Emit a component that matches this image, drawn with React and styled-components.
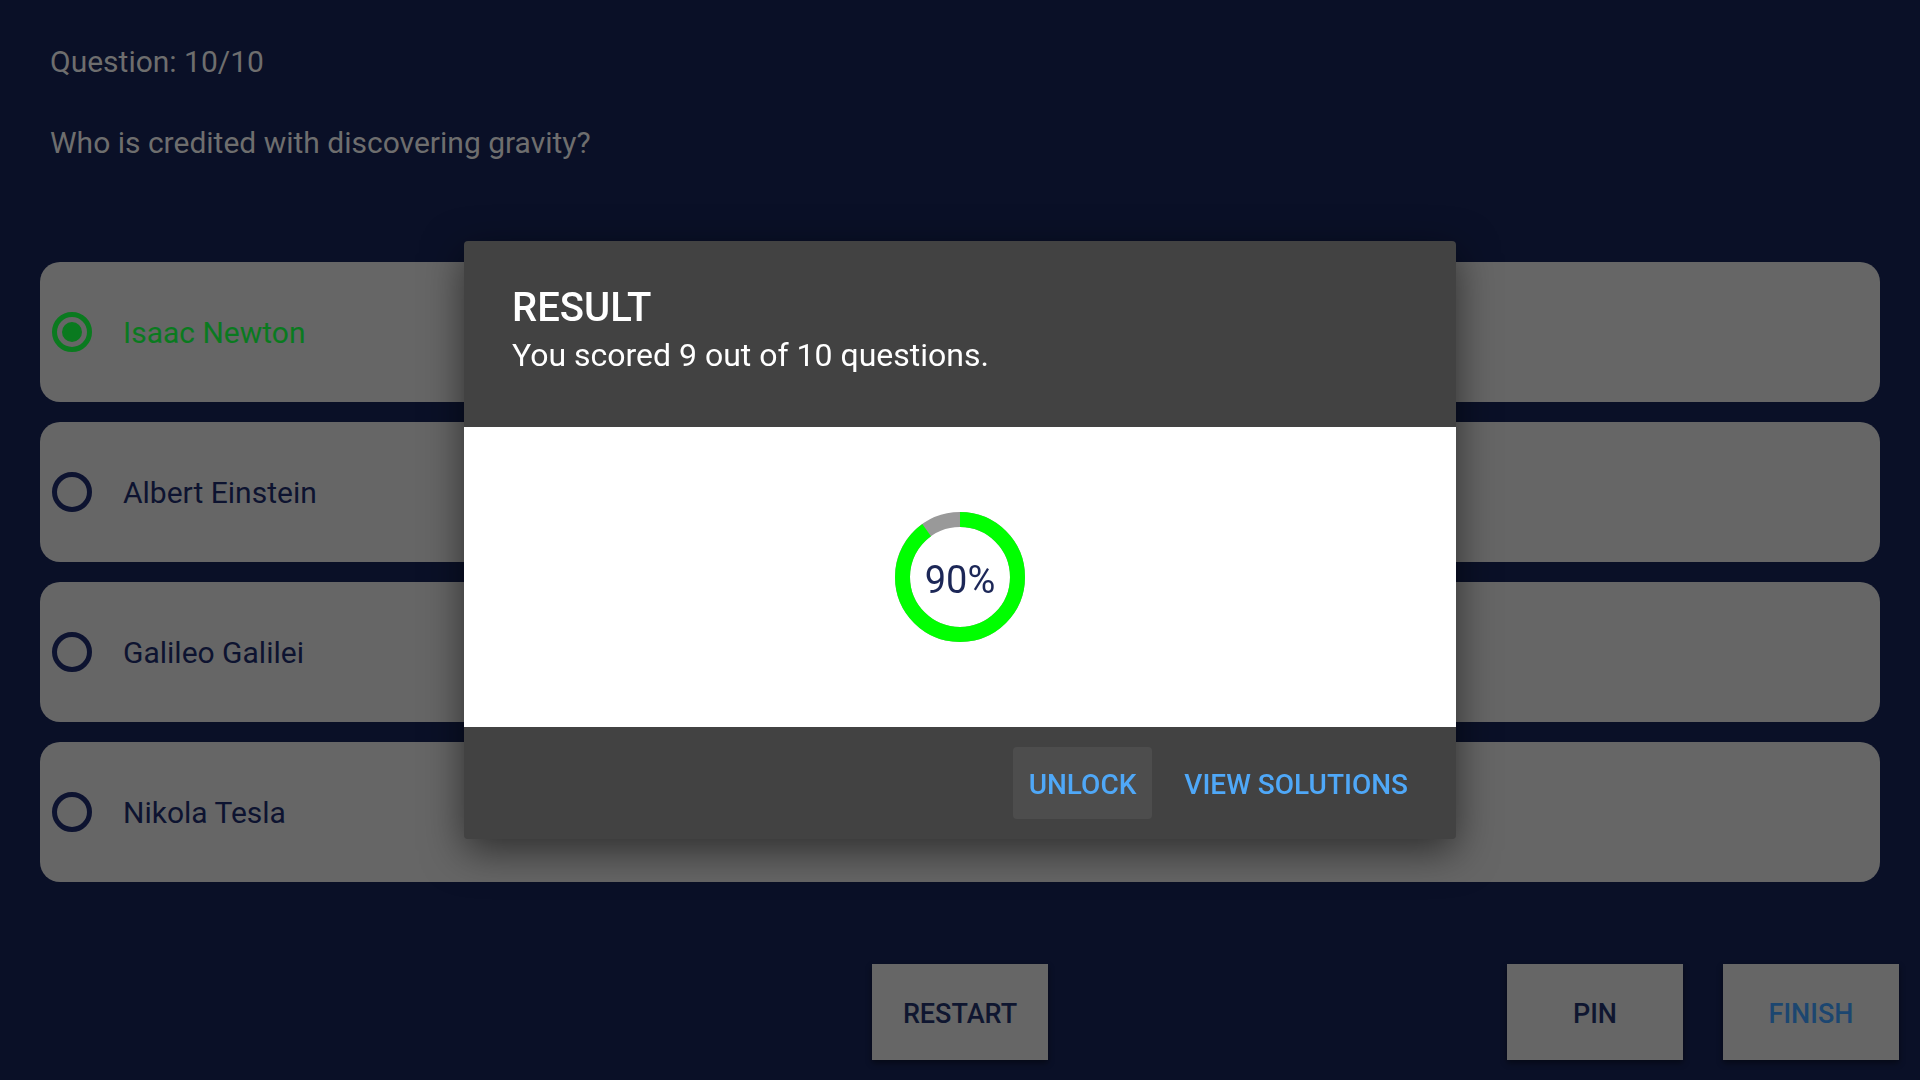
import styled, { createGlobalStyle } from "styled-components";

const GlobalStyle = createGlobalStyle`
  * {
    box-sizing: border-box;
  }

  body {
    margin: 0;
    background-color: #0a1027;
    font-family: Roboto, "Noto Sans", "Liberation Sans", sans-serif;
  }
`;

const options = [
  { id: 1, label: "Isaac Newton", checked: true },
  { id: 2, label: "Albert Einstein" },
  { id: 3, label: "Galileo Galilei" },
  { id: 4, label: "Nikola Tesla" },
];

function ScoreRing({ percent }) {
  const r = 57.5;
  const c = 2 * Math.PI * r;
  const done = (c * percent) / 100;

  return (
    <Ring>
      <svg width="130" height="130" viewBox="0 0 130 130">
        <g transform="rotate(-90 65 65)">
          <circle cx="65" cy="65" r={r} fill="none" stroke="#999999" strokeWidth="15" />
          <circle
            cx="65"
            cy="65"
            r={r}
            fill="none"
            stroke="#00ff00"
            strokeWidth="15"
            strokeDasharray={`${done} ${c}`}
          />
        </g>
      </svg>
      <RingLabel>{percent}%</RingLabel>
    </Ring>
  );
}

function App() {
  return (
    <>
      <GlobalStyle />
      <Page>
        <QuestionNumber>Question: 10/10</QuestionNumber>
        <QuestionText>Who is credited with discovering gravity?</QuestionText>

        <Options>
          {options.map((o) => (
            <Option key={o.id}>
              <Radio $checked={o.checked} />
              <OptionLabel $checked={o.checked}>{o.label}</OptionLabel>
            </Option>
          ))}
        </Options>

        <BottomBar>
          <span />
          <BarButton>RESTART</BarButton>
          <RightGroup>
            <BarButton>PIN</BarButton>
            <BarButton $accent>FINISH</BarButton>
          </RightGroup>
        </BottomBar>
      </Page>

      <Backdrop>
        <Dialog>
          <DialogHeader>
            <DialogTitle>RESULT</DialogTitle>
            <DialogMessage>You scored 9 out of 10 questions.</DialogMessage>
          </DialogHeader>
          <DialogBody>
            <ScoreRing percent={90} />
          </DialogBody>
          <DialogFooter>
            <TextButton $filled>UNLOCK</TextButton>
            <TextButton>VIEW SOLUTIONS</TextButton>
          </DialogFooter>
        </Dialog>
      </Backdrop>
    </>
  );
}

const Page = styled.div`
  display: flex;
  flex-direction: column;
  min-height: 100vh;
  padding-top: 44px;
  padding-bottom: 20px;
`;

const QuestionNumber = styled.div`
  padding: 0 50px;
  font-size: 30px;
  line-height: 36px;
  color: #6e6e6e;
`;

const QuestionText = styled.div`
  margin-top: 45px;
  padding: 0 50px;
  font-size: 30px;
  line-height: 36px;
  color: #6e6e6e;
`;

const Options = styled.div`
  display: flex;
  flex-direction: column;
  gap: 20px;
  margin-top: 101px;
  padding: 0 40px;
`;

const Option = styled.div`
  display: flex;
  align-items: center;
  gap: 31px;
  height: 140px;
  padding-left: 12px;
  border-radius: 20px;
  background-color: #666666;
`;

const Radio = styled.span`
  position: relative;
  width: 40px;
  height: 40px;
  border-radius: 50%;
  border: 5px solid ${(p) => (p.$checked ? "#0a7a1f" : "#0d1330")};
  flex-shrink: 0;

  &::after {
    content: "";
    display: ${(p) => (p.$checked ? "block" : "none")};
    position: absolute;
    inset: 5px;
    border-radius: 50%;
    background-color: #0a7a1f;
  }
`;

const OptionLabel = styled.span`
  font-size: 30px;
  color: ${(p) => (p.$checked ? "#0a7a1f" : "#0d1330")};
`;

const BottomBar = styled.div`
  display: grid;
  grid-template-columns: 1fr auto 1fr;
  align-items: center;
  margin-top: 82px;
  padding: 0 21px;
`;

const RightGroup = styled.div`
  display: flex;
  justify-content: flex-end;
  gap: 40px;
`;

const BarButton = styled.button`
  width: 176px;
  height: 96px;
  padding: 3px 0 0;
  border: none;
  border-radius: 0;
  background-color: #666666;
  box-shadow: 0 3px 6px rgba(0, 0, 0, 0.45);
  font-family: inherit;
  font-size: 27px;
  font-weight: 500;
  color: ${(p) => (p.$accent ? "#1c4670" : "#0f1630")};
`;

const Backdrop = styled.div`
  position: fixed;
  inset: 0;
  display: flex;
  align-items: center;
  justify-content: center;
`;

const Dialog = styled.div`
  width: 992px;
  border-radius: 4px;
  overflow: hidden;
  background-color: #424242;
  box-shadow: 0 12px 40px rgba(0, 0, 0, 0.55);
`;

const DialogHeader = styled.div`
  padding: 43px 48px 53px;
  color: #ffffff;
`;

const DialogTitle = styled.div`
  font-size: 40px;
  line-height: 48px;
  font-weight: 500;
`;

const DialogMessage = styled.div`
  margin-top: 4px;
  font-size: 32px;
  line-height: 38px;
`;

const DialogBody = styled.div`
  display: flex;
  align-items: center;
  justify-content: center;
  height: 300px;
  background-color: #ffffff;
`;

const Ring = styled.div`
  position: relative;
  width: 130px;
  height: 130px;

  svg {
    display: block;
  }
`;

const RingLabel = styled.span`
  position: absolute;
  inset: 0;
  display: flex;
  align-items: center;
  justify-content: center;
  padding-top: 5px;
  font-size: 38px;
  color: #1c2757;
`;

const DialogFooter = styled.div`
  display: flex;
  justify-content: flex-end;
  gap: 16px;
  padding: 20px 32px;
`;

const TextButton = styled.button`
  height: 72px;
  padding: 3px 16px 0;
  border: none;
  border-radius: 4px;
  background-color: ${(p) => (p.$filled ? "#4d4d4d" : "transparent")};
  font-family: inherit;
  font-size: 28px;
  font-weight: 500;
  color: #4fa8f8;
`;

export default App;
